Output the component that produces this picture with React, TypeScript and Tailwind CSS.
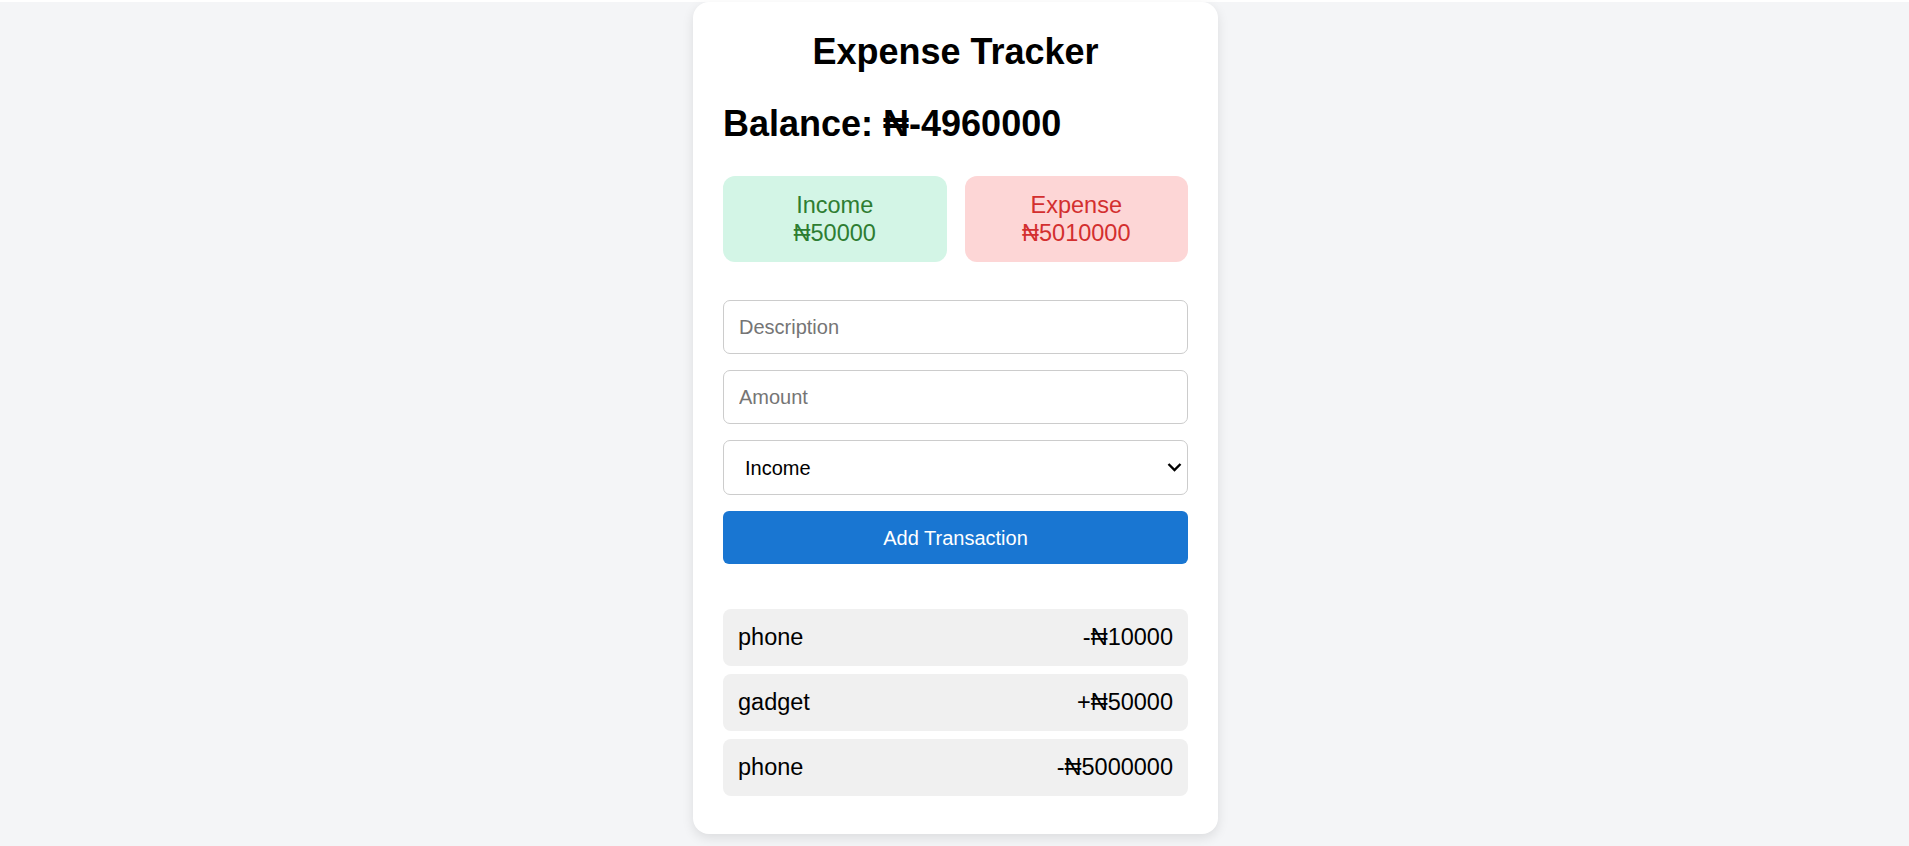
export default function App() {
  const transactions = [
    { id: 1, text: "phone", amount: "-₦10000" },
    { id: 2, text: "gadget", amount: "+₦50000" },
    { id: 3, text: "phone", amount: "-₦5000000" },
  ];

  return (
    <div className="min-h-screen bg-[#f4f5f7] pl-[2px] font-['Liberation_Sans',Arial,sans-serif] text-black">
      <div className="mx-auto mt-[2px] w-[525px] rounded-[16px] bg-white px-[30px] pb-[30px] pt-[30px] shadow-[0_4px_12px_rgba(0,0,0,0.1)]">
        <h1 className="text-center text-[36px] font-bold leading-[40px]">Expense Tracker</h1>
        <h2 className="mt-[32px] text-[36px] font-bold leading-[40px]">Balance: ₦-4960000</h2>

        <div className="mt-[32px] grid grid-cols-2 gap-[18px]">
          <div className="flex h-[86px] flex-col items-center justify-center rounded-[12px] bg-[#d3f5e6] text-[23.5px] leading-[28px] text-[#2e7d32]">
            <span>Income</span>
            <span>₦50000</span>
          </div>
          <div className="flex h-[86px] flex-col items-center justify-center rounded-[12px] bg-[#fdd6d6] text-[23.5px] leading-[28px] text-[#d32f2f]">
            <span>Expense</span>
            <span>₦5010000</span>
          </div>
        </div>

        <form className="mt-[38px] flex flex-col gap-[16px]">
          <input
            type="text"
            placeholder="Description"
            className="h-[54px] w-full rounded-[7px] border border-[#cccccc] px-[15px] text-[20px] placeholder:text-[#757575] outline-none"
          />
          <input
            type="number"
            placeholder="Amount"
            className="h-[54px] w-full rounded-[7px] border border-[#cccccc] px-[15px] text-[20px] placeholder:text-[#757575] outline-none"
          />
          <div className="relative">
            <select
              defaultValue="income"
              className="h-[55px] w-full appearance-none rounded-[7px] border border-[#cccccc] bg-white px-[21px] text-[20px] outline-none"
            >
              <option value="income">Income</option>
              <option value="expense">Expense</option>
            </select>
            <svg
              className="pointer-events-none absolute right-[6px] top-[21px] h-[12px] w-[15px]"
              viewBox="0 0 15 12"
              fill="none"
              stroke="#000"
              strokeWidth="2.4"
            >
              <path d="M1.5 3 L7.5 9 L13.5 3" />
            </svg>
          </div>
          <button
            type="button"
            className="h-[53px] w-full rounded-[6px] bg-[#1976d2] text-[20px] text-white"
          >
            Add Transaction
          </button>
        </form>

        <ul className="mt-[45px]">
          {transactions.map((t) => (
            <li
              key={t.id}
              className="mb-[8px] flex h-[57px] items-center justify-between rounded-[8px] bg-[#f0f0f0] px-[15px] text-[23.5px]"
            >
              <span>{t.text}</span>
              <span>{t.amount}</span>
            </li>
          ))}
        </ul>
      </div>
    </div>
  );
}
